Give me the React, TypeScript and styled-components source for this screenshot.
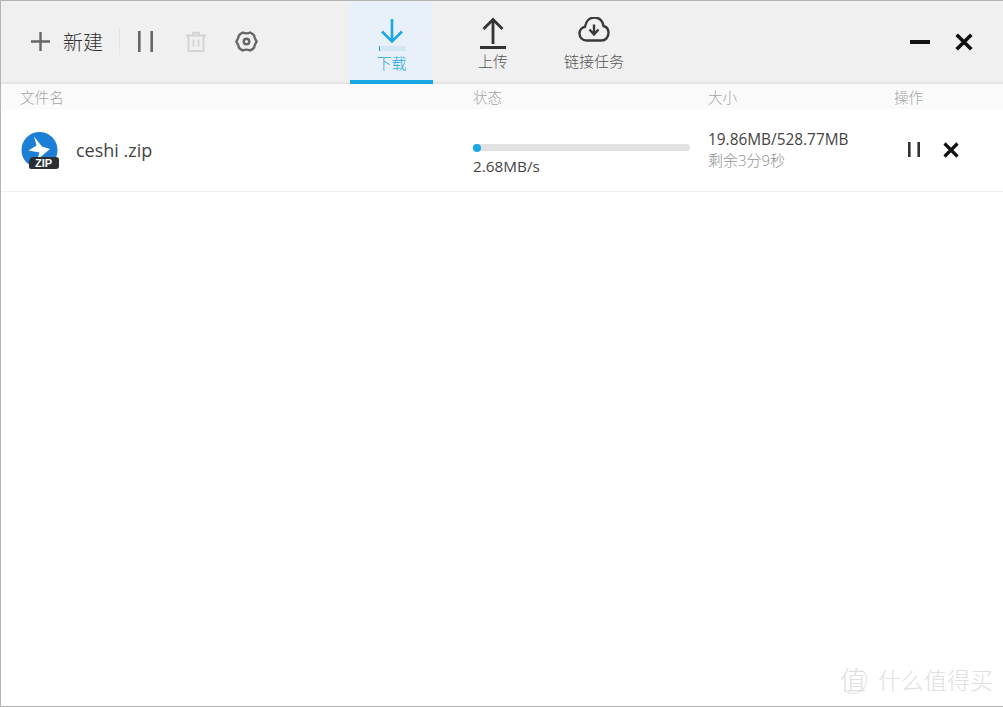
import React from "react";
import styled, { createGlobalStyle } from "styled-components";

const Global = createGlobalStyle`
  html, body { margin: 0; padding: 0; background: #fff; }
  body { font-family: "Open Sans", "Noto Sans CJK SC", sans-serif; }
`;

const Window = styled.div`
  position: relative;
  box-sizing: border-box;
  width: 1003px;
  height: 707px;
  border-left: 1px solid #b4b4b4;
  border-top: 1px solid #b4b4b4;
  border-bottom: 1px solid #b4b4b4;
  background: #fff;
  overflow: hidden;
`;

const Toolbar = styled.header`
  box-sizing: border-box;
  height: 83px;
  background: #f0f0f0;
  border-bottom: 2px solid #e4e4e4;
  display: flex;
  align-items: flex-start;
  position: relative;
`;

const LeftTools = styled.div`
  width: 349px;
  height: 81px;
  display: flex;
  align-items: center;
  padding-left: 29px;
  box-sizing: border-box;
`;

const NewButton = styled.div`
  display: flex;
  align-items: center;
  gap: 12px;
  font-size: 20px;
  color: #333;
  line-height: 24px;
  font-weight: 300;
  width: 89px;
  & > span {
    margin-top: 2px;
  }
`;

const Divider = styled.div`
  width: 1px;
  height: 26px;
  background: #e3e3e3;
`;

const ToolIcon = styled.div<{ $left: number }>`
  display: flex;
  margin-left: ${(p) => p.$left}px;
`;

const Tabs = styled.nav`
  display: flex;
  height: 83px;
`;

const Tab = styled.div<{ $active?: boolean; $width: number }>`
  box-sizing: border-box;
  width: ${(p) => p.$width}px;
  height: 83px;
  display: flex;
  flex-direction: column;
  align-items: center;
  padding-top: 16px;
  font-size: 15px;
  line-height: 20px;
  font-weight: 300;
  color: ${(p) => (p.$active ? "#1aa7e4" : "#555")};
  background: ${(p) => (p.$active ? "#e8f1f9" : "transparent")};
  border-bottom: 4px solid ${(p) => (p.$active ? "#1aa7e4" : "transparent")};
  & > span {
    margin-top: ${(p) => (p.$active ? 0 : -2)}px;
  }
`;

const TabIcon = styled.div`
  height: 36px;
  display: flex;
  justify-content: center;
`;

const WindowButtons = styled.div`
  margin-left: auto;
  height: 81px;
  display: flex;
  align-items: center;
  gap: 25px;
  padding-right: 30px;
`;

const HeaderRow = styled.div`
  display: grid;
  grid-template-columns: 453px 235px 186px 1fr;
  box-sizing: border-box;
  height: 25px;
  padding-left: 19px;
  align-items: center;
  background: #fafafa;
  font-size: 14.6px;
  color: #a6a6a6;
  font-weight: 300;
`;

const FileRow = styled.div`
  display: grid;
  grid-template-columns: 453px 235px 186px 1fr;
  box-sizing: border-box;
  height: 83px;
  padding-left: 19px;
  align-items: center;
  border-bottom: 1px solid #f0f0f0;
`;

const NameCell = styled.div`
  display: flex;
  align-items: center;
  gap: 17px;
  font-size: 18px;
  color: #444;
  line-height: 24px;
  margin-top: 1px;
  padding-left: 1px;
  & > span {
    margin-top: -2px;
  }
`;

const StatusCell = styled.div`
  display: flex;
  flex-direction: column;
  gap: 5px;
  margin-top: 20px;
`;

const Track = styled.div`
  width: 217px;
  height: 7px;
  border-radius: 4px;
  background: #e1e1e1;
`;

const Fill = styled.div`
  height: 8px;
  margin-top: -1px;
  position: relative;
  top: 0.5px;
  border-radius: 4px;
  background: #1aa7e4;
`;

const Speed = styled.div`
  font-size: 15.3px;
  line-height: 20px;
  color: #444;
`;

const SizeCell = styled.div`
  display: flex;
  flex-direction: column;
  margin-top: -1px;
`;

const SizeText = styled.div`
  font-size: 15.4px;
  line-height: 20px;
  color: #444;
`;

const Remaining = styled.div`
  font-size: 15px;
  line-height: 20px;
  color: #909090;
  font-weight: 300;
`;

const Actions = styled.div`
  display: flex;
  align-items: center;
  gap: 23px;
  padding-left: 14px;
  margin-top: -1px;
`;

const Watermark = styled.div`
  position: absolute;
  right: 10px;
  bottom: 10px;
  display: flex;
  align-items: center;
  gap: 11px;
  color: #e0e0e0;
  font-size: 23px;
  font-weight: 300;
  line-height: 32px;
`;

const Seal = styled.div`
  box-sizing: border-box;
  width: 28px;
  height: 28px;
  border-radius: 50%;
  border: 1px solid #e0e0e0;
  border-left-color: transparent;
  border-top-color: transparent;
  display: flex;
  align-items: center;
  justify-content: center;
  font-size: 26px;
`;

const PlusIcon = () => (
  <svg width="21" height="21" viewBox="0 0 21 21">
    <path d="M10.5 1v19M1 10.5h19" stroke="#666" strokeWidth="2.4" fill="none" />
  </svg>
);

const PauseBars = ({ w, h, sw, color }: { w: number; h: number; sw: number; color: string }) => (
  <svg width={w} height={h} viewBox={`0 0 ${w} ${h}`}>
    <path d={`M${sw / 2} 0V${h}M${w - sw / 2} 0V${h}`} stroke={color} strokeWidth={sw} fill="none" />
  </svg>
);

const TrashIcon = () => (
  <svg width="22" height="22" viewBox="0 0 22 22" fill="none" stroke="#d4d4d4" strokeWidth="2">
    <path d="M1 4.500h20M8 4.500V1.800h6v2.700M3.500 4.500V20h15V4.500M8.500 8.500v7M13.500 8.500v7" />
  </svg>
);

const GearIcon = () => (
  <svg width="23" height="23" viewBox="0 0 24 24" fill="none" stroke="#666" strokeWidth="2.500">
    <path
      d="M8 2.600c2.600 1.200 5.400 1.200 8 0 1.600.9 3 1.800 4 3.200.3 2.900 1.600 4.200 2.600 6.200-1 2-2.300 3.300-2.600 6.200-1 1.400-2.400 2.300-4 3.200-2.600-1.200-5.400-1.200-8 0-1.600-.9-3-1.800-4-3.200C3.700 15.300 2.400 14 1.400 12c1-2 2.300-3.300 2.600-6.200 1-1.400 2.400-2.300 4-3.200z"
      strokeLinejoin="round"
    />
    <circle cx="12" cy="12" r="2.900" />
  </svg>
);

const DownloadIcon = () => (
  <svg width="32" height="34" viewBox="0 0 32 34" fill="none">
    <path d="M16 2v22M6 14.500 16 24.500 26 14.500" stroke="#1aa7e4" strokeWidth="2.600" />
    <rect x="3" y="29" width="27" height="5" fill="#d3e6f3" />
    <rect x="3" y="29" width="1" height="5" fill="#1aa7e4" />
  </svg>
);

const UploadIcon = () => (
  <svg width="28" height="34" viewBox="0 0 28 34" fill="none">
    <path d="M14 27V2.500M4.500 12 14 2.500 23.500 12" stroke="#333" strokeWidth="2.800" />
    <path d="M1 30.500h26" stroke="#333" strokeWidth="3" />
  </svg>
);

const CloudIcon = () => (
  <svg width="32" height="26" viewBox="0 1 32 26" fill="none">
    <path
      d="M8.500 24.500C4.500 24.500 1.500 21.500 1.500 17.500c0-3.500 2.400-6.200 5.500-6.800C7.800 5.200 11.500 1.500 16.500 1.500c4.800 0 8.500 3.500 9 8.500 3 .8 5 3.600 5 7 0 4.200-3 7.500-7 7.500z"
      stroke="#3a3a3a"
      strokeWidth="2.400"
    />
    <path d="M16 8.500v9M11.500 13.500l4.500 5 4.500-5" stroke="#3a3a3a" strokeWidth="2.400" />
  </svg>
);

const MinimizeIcon = () => (
  <svg width="20" height="4" viewBox="0 0 20 4">
    <rect width="20" height="4" fill="#111" />
  </svg>
);

const CloseIcon = ({ size }: { size: number }) => (
  <svg width={size} height={size} viewBox="0 0 16 16">
    <path d="M1.500 1.500l13 13M14.500 1.500l-13 13" stroke="#111" strokeWidth="3.200" fill="none" />
  </svg>
);

const ZipIcon = () => (
  <svg width="38" height="38" viewBox="0 0 38 38">
    <circle cx="18.500" cy="18" r="18" fill="#1b7fd8" />
    <path d="M13 4.500 21 14.500 29 17 16 28 18.500 20.500 7.500 18.500 15.500 13.500z" fill="#fff" />
    <path d="M12 25h23a3 3 0 0 1 3 3v6a3 3 0 0 1-3 3H10a2 2 0 0 1-2-2v-5c0-3 2-5 4-5z" fill="#2b2f33" />
    <text x="14" y="34.500" fontFamily="'Liberation Sans', sans-serif" fontSize="11" fontWeight="700" fill="#fff">
      ZIP
    </text>
  </svg>
);

export default function App() {
  const progress = (19.86 / 528.77) * 100;
  return (
    <>
      <Global />
      <Window>
        <Toolbar>
          <LeftTools>
            <NewButton>
              <PlusIcon />
              <span>新建</span>
            </NewButton>
            <Divider />
            <ToolIcon $left={18}>
              <PauseBars w={15} h={21} sw={2.600} color="#666" />
            </ToolIcon>
            <ToolIcon $left={32}>
              <TrashIcon />
            </ToolIcon>
            <ToolIcon $left={28}>
              <GearIcon />
            </ToolIcon>
          </LeftTools>
          <Tabs>
            <Tab $active $width={83}>
              <TabIcon>
                <DownloadIcon />
              </TabIcon>
              <span>下载</span>
            </Tab>
            <Tab $width={120}>
              <TabIcon>
                <UploadIcon />
              </TabIcon>
              <span>上传</span>
            </Tab>
            <Tab $width={82}>
              <TabIcon>
                <CloudIcon />
              </TabIcon>
              <span>链接任务</span>
            </Tab>
          </Tabs>
          <WindowButtons>
            <MinimizeIcon />
            <CloseIcon size={18} />
          </WindowButtons>
        </Toolbar>
        <HeaderRow>
          <span>文件名</span>
          <span>状态</span>
          <span>大小</span>
          <span>操作</span>
        </HeaderRow>
        <FileRow>
          <NameCell>
            <ZipIcon />
            <span>ceshi .zip</span>
          </NameCell>
          <StatusCell>
            <Track>
              <Fill style={{ width: `${Math.max(progress / 10, 3.700)}%` }} />
            </Track>
            <Speed>2.68MB/s</Speed>
          </StatusCell>
          <SizeCell>
            <SizeText>19.86MB/528.77MB</SizeText>
            <Remaining>剩余3分9秒</Remaining>
          </SizeCell>
          <Actions>
            <PauseBars w={12} h={15} sw={2.600} color="#333" />
            <CloseIcon size={16} />
          </Actions>
        </FileRow>
        <Watermark>
          <Seal>值</Seal>
          <span>什么值得买</span>
        </Watermark>
      </Window>
    </>
  );
}
